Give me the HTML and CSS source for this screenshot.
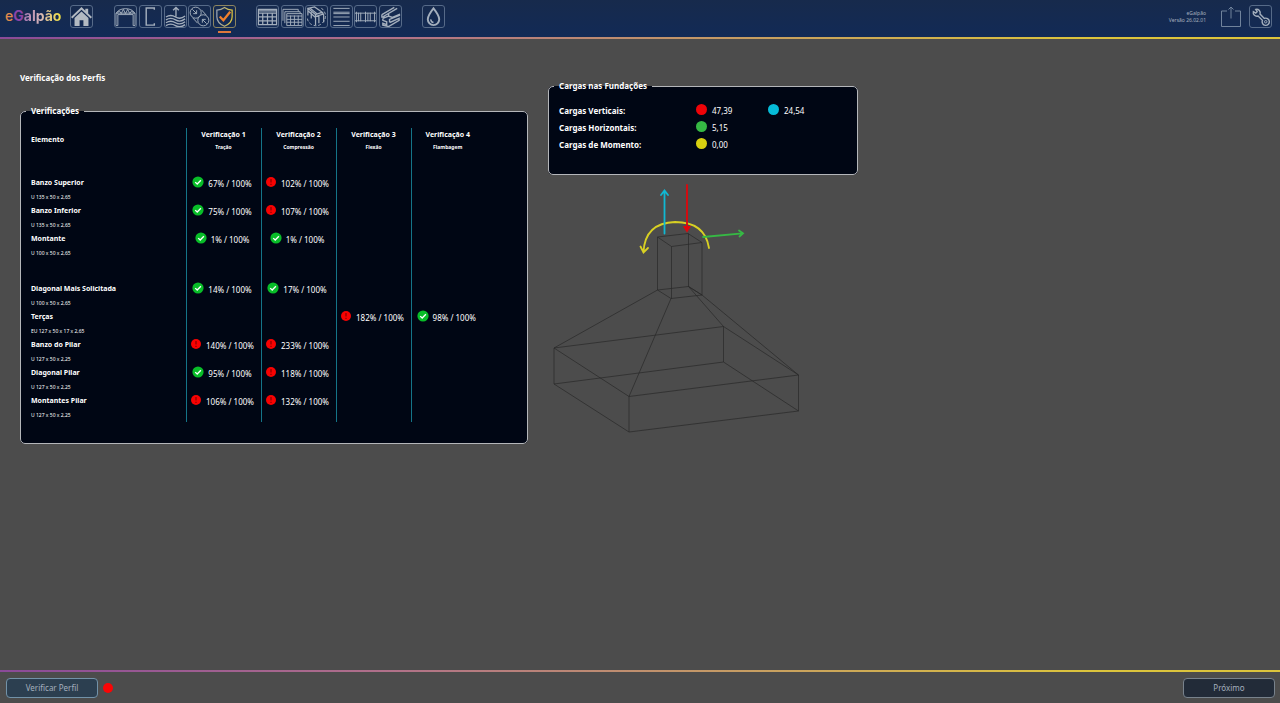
FILE: index.html
```html
<!DOCTYPE html>
<html lang="pt-BR">
<head>
<meta charset="utf-8">
<title>eGalpão</title>
<link rel="stylesheet" href="styles.css">
</head>
<body>
<svg class="defs" aria-hidden="true">
  <symbol id="ok" viewBox="0 0 12 12"><circle cx="6" cy="6" r="5.600" fill="#08bd28"/><path d="M3.200 6.100 5.200 8 8.900 4.200" fill="none" stroke="#fff" stroke-width="1.300"/></symbol>
  <symbol id="bad" viewBox="0 0 12 12"><circle cx="6" cy="6" r="5" fill="#f80202"/><path d="M6 3v3.600M6 7.800v1.300" fill="none" stroke="#8a0000" stroke-width="1.200"/></symbol>
</svg>
<header class="topbar">
  <div class="logo"><span class="logo-e">e</span><span class="logo-g">G</span><span class="logo-rest">alpão</span></div>
  <nav class="tools">
    <button class="tool home" aria-label="Início"><svg viewBox="1 1 22 22"><path fill="#b3bac2" stroke="none" d="M12 2 1 12.600l1.400 1.400L12 5l9.600 9 1.400-1.400-4-3.800V4h-3v1.900zM12 6.800l-7.300 6.700V22H10v-6h4v6h5.300v-8.500z"/></svg></button>
    <div class="group five">
      <button class="tool" aria-label="Galpão"><svg viewBox="1 1 22 22"><path d="M2 21.500V8.500L5 5.500q7-3.500 14 0l3 3v13h-2V10H4v11.500H2M2 8.500h20M3 9l2.500-3 2 3 2.200-4.500L12 9l2.300-4.500L16.500 9l2-3L21 9"/></svg></button>
      <button class="tool" aria-label="Perfil"><svg viewBox="1 1 22 22"><path stroke-width="1.500" d="M16 5V3H7.500v18H16V19"/></svg></button>
      <button class="tool" aria-label="Vento"><svg viewBox="1 1 22 22"><path stroke-width="1.400" d="M12.500 12V3M9.500 5.500l3-3 3 3M2 12.500q5-3 10 0t10-1M2 15.500q5-3 10 0t10-1M2 18.500q5-3 10 0t10-1M2 21.500q5-3 10 0t10-1"/></svg></button>
      <button class="tool" aria-label="Ligações"><svg viewBox="1 1 22 22"><circle cx="8" cy="8" r="5.800"/><circle cx="16" cy="16" r="5.800"/><path d="m4.500 4.500 4.500 4.500M9 5.500V9H5.500M19.500 19.500 15 15M15 18.500V15h3.500M5 13.500l5 5.500M14 5l5 5.500"/></svg></button>
      <button class="tool current" aria-label="Verificação" aria-current="page"><svg viewBox="1 1 22 22"><defs><linearGradient id="shield"><stop stop-color="#9aa2b4"/><stop offset="1" stop-color="#dcc43c"/></linearGradient></defs><path stroke="url(#shield)" stroke-width="1.300" d="M12 2.500q3.500 2.500 8 2.700v7q0 6.500-8 10-8-3.500-8-10v-7q4.500-.2 8-2.700z"/><path stroke="#f0802c" stroke-width="2.400" d="m7 12 3.800 4L18 7"/></svg></button>
    </div>
    <div class="group six">
      <button class="tool" aria-label="Tabela"><svg viewBox="1 1 22 22"><path stroke-width="1.300" d="M2.500 4.500h19v16h-19zM2.500 8.500h19M2.500 12.500h19M2.500 16.500h19M7 8v12.500M12 8v12.500M17 8v12.500M2.500 6h19"/></svg></button>
      <button class="tool" aria-label="Tabelas"><svg viewBox="1 1 22 22"><path d="M6 9h16v12.500H6zM6 11.500h16M6 15h16M6 18h16M10 11v10M14 11v10M18 11v10M4 19V7h16v2M2 16.500V4.500h16V7"/></svg></button>
      <button class="tool" aria-label="Modelo 3D"><svg viewBox="1 1 22 22"><path stroke-width="1.300" d="M3 3.500 10 2l8 5.500-7 2.500zM3 3.500V11M11 10v11M18 7.500l1.500 2.500v8M11 12l8-2.500M14.500 11v8M3 6l8 7M6.500 7.500V14M5 3l8 6.500"/><path stroke-dasharray="3 2" d="M17 3q8.500 8 1 16-5 4.500-11 1.500-5-3-4.500-8"/></svg></button>
      <button class="tool" aria-label="Lista"><svg viewBox="1 1 22 22"><path d="M3.500 3.500h17M3.500 7.500h17M3.500 9h17M3.500 12.500h17M3.500 17h17M3.500 21.500h17"/></svg></button>
      <button class="tool" aria-label="Elevação"><svg viewBox="1 1 22 22"><path d="M1 8.500h22M1 16.500h22M2.500 7v11M7 8v9M12 7v11M17 8v9M21.500 7v11M4.700 8v9M14.500 8v9"/></svg></button>
      <button class="tool" aria-label="Vigas"><svg viewBox="1 1 22 22"><path stroke-width="1.500" d="M3 10 16 2.500M4.500 12 19 3.500M3 10v2.500h3M10 8.500v4M4 14l6-2.500 4 1.500 8-3.500M4 14v2l4 1.500v3l-4-1.500v2l6 1.500L21 16v-2l-9 4-1-.5V15l11-4.500"/></svg></button>
    </div>
    <button class="tool" aria-label="Gota"><svg viewBox="1 1 22 22"><path stroke-width="2" d="M12 3.500q6 7.500 6 11.500a6 6 0 0 1-12 0q0-4 6-11.500z"/><path stroke-width="1.500" d="M9 15q.5 3 3 3.300"/></svg></button>
  </nav>
  <div class="right">
    <p class="version">eGalpão<br>Versão 26.02.01</p>
    <button class="plain" aria-label="Exportar"><svg viewBox="0 0 22 22"><path d="M7 5.500H1.500v15.500h19V5.500H15M11 13V1.500M8.500 4 11 1.500 13.500 4"/></svg></button>
    <button class="tool" aria-label="Configurações"><svg viewBox="1 1 22 22"><path stroke-width="1.500" d="M7 4.500 8.500 7 7 8.500 4.500 7A3.800 3.800 0 0 0 9.500 11.500l4.500 4.500a3.800 3.800 0 1 0 2-2L11.500 9.500A3.800 3.800 0 0 0 7 4.500z"/><circle cx="17.500" cy="17.500" r="1.300"/></svg></button>
  </div>
</header>

<main class="content">
  <section class="checks">
    <h1>Verificação dos Perfis</h1>
    <fieldset>
      <legend>Verificações</legend>
      <table class="check-table">
        <colgroup><col class="c-name"><col class="c-val"><col class="c-val"><col class="c-val"><col class="c-last"></colgroup>
        <thead><tr>
          <th class="element">Elemento</th>
          <th>Verificação 1<small>Tração</small></th>
          <th>Verificação 2<small>Compressão</small></th>
          <th>Verificação 3<small>Flexão</small></th>
          <th>Verificação 4<small>Flambagem</small></th>
        </tr></thead>
        <tbody>
          <tr><th>Banzo Superior<small>U 135 x 50 x 2,65</small></th><td><svg><use href="#ok"/></svg>67% / 100%</td><td><svg><use href="#bad"/></svg>102% / 100%</td><td></td><td></td></tr>
          <tr><th>Banzo Inferior<small>U 135 x 50 x 2,65</small></th><td><svg><use href="#ok"/></svg>75% / 100%</td><td><svg><use href="#bad"/></svg>107% / 100%</td><td></td><td></td></tr>
          <tr class="spaced"><th>Montante<small>U 100 x 50 x 2,65</small></th><td><svg><use href="#ok"/></svg>1% / 100%</td><td><svg><use href="#ok"/></svg>1% / 100%</td><td></td><td></td></tr>
          <tr><th>Diagonal Mais Solicitada<small>U 100 x 50 x 2,65</small></th><td><svg><use href="#ok"/></svg>14% / 100%</td><td><svg><use href="#ok"/></svg>17% / 100%</td><td></td><td></td></tr>
          <tr><th>Terças<small>EU 127 x 50 x 17 x 2,65</small></th><td></td><td></td><td><svg><use href="#bad"/></svg>182% / 100%</td><td><svg><use href="#ok"/></svg>98% / 100%</td></tr>
          <tr><th>Banzo do Pilar<small>U 127 x 50 x 2,25</small></th><td><svg><use href="#bad"/></svg>140% / 100%</td><td><svg><use href="#bad"/></svg>233% / 100%</td><td></td><td></td></tr>
          <tr><th>Diagonal Pilar<small>U 127 x 50 x 2,25</small></th><td><svg><use href="#ok"/></svg>95% / 100%</td><td><svg><use href="#bad"/></svg>118% / 100%</td><td></td><td></td></tr>
          <tr><th>Montantes Pilar<small>U 127 x 50 x 2,25</small></th><td><svg><use href="#bad"/></svg>106% / 100%</td><td><svg><use href="#bad"/></svg>132% / 100%</td><td></td><td></td></tr>
        </tbody>
      </table>
    </fieldset>
  </section>

  <section class="loads">
    <fieldset>
      <legend>Cargas nas Fundações</legend>
      <table class="load-table">
        <tr><th>Cargas Verticais:</th><td class="first"><i class="dot red"></i>47,39</td><td><i class="dot cyan"></i>24,54</td></tr>
        <tr><th>Cargas Horizontais:</th><td class="first"><i class="dot green"></i>5,15</td><td></td></tr>
        <tr><th>Cargas de Momento:</th><td class="first"><i class="dot yellow"></i>0,00</td><td></td></tr>
      </table>
    </fieldset>
    <svg class="foundation" viewBox="548 180 260 260" role="img" aria-label="Fundação">
      <g fill="none" stroke="#282828" stroke-width=".7">
        <path d="M554 348 723.500 326.500 798.500 375 629 396.500zM554 384 723.500 362 798.500 411 629 432zM554 348v36M723.500 326.500V362M798.500 375v36M629 396.500V432"/>
        <path d="M657.500 237 688 233.500 702 242.500 671.500 246.500zM657.500 290 688.500 286.500 702 295 671 298.500zM657.500 237v53M688.500 233.500v53M702 242.500V295M671.500 246.500v52"/>
        <path d="M657.500 290 554 348M688.500 286.500 723.500 326.500M702 295 798.500 375M671 298.500 629 396.500M688.500 286.500 702 295"/>
      </g>
      <g fill="none" stroke-width="1.800" stroke-linecap="round">
        <path stroke="#d8d023" d="M709 248Q705 222 675 222 645 223 643.500 252M640.500 246.500 643.500 252.500 648 248"/>
        <path stroke="#10b8d2" d="M664.500 233.500V191M661 195 664.500 190.500 668 195"/>
        <path stroke="#e0060c" d="M687 185v46M684.500 227 687 231 689.500 227z"/>
        <path stroke="#36b844" d="M703 237 742.500 233.300M739 230.500 743 233.300 739.500 236.500"/>
      </g>
    </svg>
  </section>
</main>

<footer class="bottombar">
  <button class="action verify">Verificar Perfil</button>
  <i class="status"></i>
  <button class="action next">Próximo</button>
</footer>
</body>
</html>
```

FILE: styles.css
```css
* { box-sizing: border-box; }
body {
  margin: 0;
  min-height: 100vh;
  display: flex;
  flex-direction: column;
  background: #4c4c4c;
  color: #fff;
  font: 8px/12px "Noto Sans", "Open Sans", sans-serif;
}
button { font: inherit; padding: 0; cursor: pointer; }
.defs { display: none; }

.topbar {
  display: flex;
  align-items: flex-start;
  height: 39px;
  padding: 5px 8px 0 5px;
  border-bottom: 2px solid;
  border-image: linear-gradient(90deg, #8a4a98, #b0708a 30%, #c8a060 60%, #dcc43c 85%) 1;
  background: linear-gradient(#172a4c, #122a56);
}
.logo { width: 65px; font: 700 14px/22px Inter, sans-serif; }
.logo-e { color: #e08a4c; font-weight: 500; }
.logo-g { color: #8a44a8; }
.logo-rest {
  background: linear-gradient(90deg, #a878b4, #d8b8b8 45%, #f0e040);
  background-clip: text;
  color: transparent;
}
.tools { display: flex; }
.home { margin-right: 21px; }
.group { display: flex; justify-content: space-between; margin-right: 20px; }
.five { width: 122px; }
.six { width: 146px; }
.tool {
  position: relative;
  width: 23px;
  height: 23px;
  border: 1px solid #566a88;
  border-radius: 3px;
  background: none;
}
.tool svg, .plain svg {
  display: block;
  width: 100%;
  height: 100%;
  fill: none;
  stroke: #a4afbd;
  stroke-width: 1;
}
.current { border-color: #8c8560; }
.current::after {
  content: "";
  position: absolute;
  left: 4px;
  right: 4px;
  bottom: -6px;
  height: 2px;
  background: #e0783c;
}
.right { display: flex; margin-left: auto; }
.version {
  margin: 5px 14px 0 0;
  color: #a4afbd;
  font-size: 5px;
  line-height: 7px;
  text-align: right;
}
.plain { width: 22px; height: 23px; margin-right: 7px; border: 0; background: none; }
.plain svg { stroke: #70839c; }

.content {
  flex: 1;
  display: grid;
  grid-template-columns: minmax(0, 508px) minmax(0, 310px);
  gap: 20px;
  align-items: start;
  padding: 33px 20px;
}
h1 { margin: 0 0 21px; font-size: 8px; line-height: 12px; }
fieldset {
  min-width: 0;
  margin: 0;
  padding: 11px 5px 21px;
  border: 1px solid #b4b6ba;
  border-radius: 5px;
  background: #000614;
}
legend { padding: 0 5px; font-weight: 700; }
table { border-collapse: collapse; }
th, td { padding: 0; vertical-align: top; }
th { text-align: left; }

.check-table { table-layout: fixed; width: 458px; max-width: 100%; line-height: 14px; }
.c-name { width: 160px; }
.c-val { width: 75px; }
.c-last { width: 73px; }
.check-table th { font-size: 7px; }
.check-table small { display: block; font-size: 5px; }
.check-table tbody small { font-weight: 400; }
.check-table thead th { height: 48px; padding-top: 1px; line-height: 12px; text-align: center; }
.check-table thead .element { padding: 6px 0 0 5px; text-align: left; }
.check-table tbody th { padding-left: 5px; height: 28px; }
.check-table .spaced th { height: 50px; }
.check-table tr > * + * { border-left: 1px solid #147488; }
.check-table td { padding-right: 3px; text-align: center; white-space: nowrap; }
.check-table td svg { width: 12px; height: 12px; margin-right: 4px; vertical-align: -1px; }

.loads { padding-top: 8px; }
.load-table { margin-left: 5px; line-height: 17px; }
.load-table th { width: 137px; }
.load-table .first { width: 72px; }
.dot {
  display: inline-block;
  width: 11px;
  height: 11px;
  margin-right: 5px;
  border-radius: 50%;
  vertical-align: -1px;
}
.loads fieldset { padding-top: 10px; }
.red { background: #ee0308; }
.cyan { background: #06bcd8; }
.green { background: #36b844; }
.yellow { background: #d8d010; }
.foundation { display: block; width: 260px; max-width: 100%; margin-top: 5px; }

.bottombar {
  display: flex;
  align-items: center;
  height: 33px;
  padding: 0 5px 0 6px;
  border-top: 2px solid;
  border-image: linear-gradient(90deg, #8a4a98, #b0708a 30%, #c8a060 60%, #dcc43c 85%) 1;
}
.action {
  width: 92px;
  height: 20px;
  border: 1px solid #78828c;
  border-radius: 4px;
  color: #a4afbd;
}
.verify { background: #2c3f50; border-color: #7292a8; }
.next { margin-left: auto; background: #222b38; }
.status { width: 10px; height: 10px; margin-left: 5px; border-radius: 50%; background: #fa0505; }
```
